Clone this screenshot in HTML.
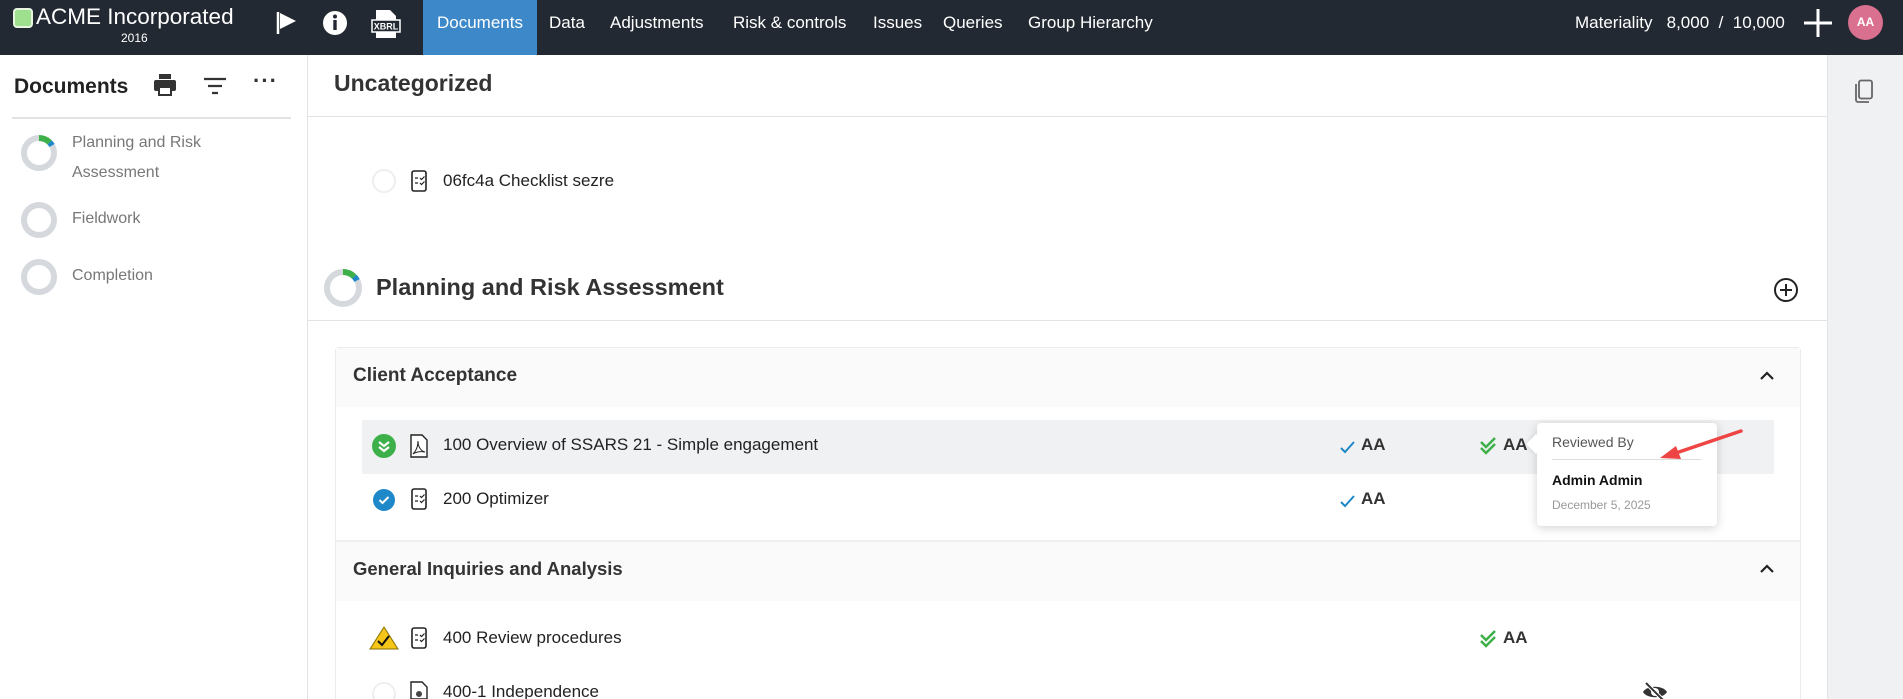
<!DOCTYPE html>
<html style="width:1903px;height:699px;overflow:hidden"><head><meta charset="utf-8"><style>
*{box-sizing:border-box;margin:0;padding:0}
body{width:1903px;height:699px;overflow:hidden;background:#fff;font-family:"Liberation Sans",sans-serif;color:#222;position:relative}
.a{position:absolute;white-space:nowrap}
.nav{position:absolute;left:0;top:0;width:1903px;height:55px;background:#232932}
.ni{position:absolute;top:0;height:55px;line-height:46px;color:#fff;font-size:17px}
</style></head><body>
<div class="nav"></div>
<div class="a" style="left:13px;top:8px;width:20px;height:20px;background:#9fe08e;border:2px solid #e8f5e0;border-radius:4px"></div>
<div class="a" style="left:36px;top:4px;color:#fff;font-size:22.5px">ACME Incorporated</div>
<div class="a" style="left:121px;top:31px;color:#fff;font-size:12px">2016</div>
<svg class="a" style="left:276px;top:10px" width="22" height="26" viewBox="0 0 22 26"><path d="M2 2v22" stroke="#fff" stroke-width="2.5"/><path d="M4 3l16 8-16 8z" fill="#fff"/></svg>
<svg class="a" style="left:322px;top:10px" width="26" height="26"><circle cx="13" cy="13" r="12" fill="#fff"/><rect x="11.3" y="10" width="3.4" height="10" fill="#232932"/><circle cx="13" cy="6.5" r="2" fill="#232932"/></svg>
<svg class="a" style="left:370px;top:8px" width="32" height="32" viewBox="0 0 32 32"><path d="M6 2h14l6 6v22H6z" fill="#fff"/><rect x="2" y="12" width="28" height="12" fill="#232932" stroke="#fff" stroke-width="1.5"/><text x="16" y="21.5" font-size="9" font-weight="bold" fill="#fff" text-anchor="middle" font-family="Liberation Sans">XBRL</text></svg>
<div class="ni" style="left:423px;width:114px;background:#3d88c9;text-align:center">Documents</div>
<div class="ni" style="left:549px">Data</div>
<div class="ni" style="left:610px">Adjustments</div>
<div class="ni" style="left:733px">Risk &amp; controls</div>
<div class="ni" style="left:873px">Issues</div>
<div class="ni" style="left:943px">Queries</div>
<div class="ni" style="left:1028px">Group Hierarchy</div>
<div class="ni" style="left:1575px">Materiality&nbsp;&nbsp; 8,000 &nbsp;/&nbsp; 10,000</div>
<svg class="a" style="left:1803px;top:8px" width="30" height="30"><path d="M15 1v28M1 15h28" stroke="#fff" stroke-width="3"/></svg>
<div class="a" style="left:1848px;top:5px;width:35px;height:35px;border-radius:50%;background:#d9708f;color:#fff;font-size:12px;font-weight:bold;text-align:center;line-height:35px">AA</div>

<div class="a" style="left:307px;top:55px;width:1px;height:644px;background:#e3e3e3"></div>
<div class="a" style="left:14px;top:75px;font-size:21px;font-weight:bold">Documents</div>
<svg class="a" style="left:153px;top:74px" width="24" height="22" viewBox="0 0 24 22"><rect x="6" y="0" width="12" height="5" fill="#333"/><rect x="1" y="6" width="22" height="11" rx="2" fill="#333"/><rect x="6" y="13" width="12" height="8" fill="#fff" stroke="#333" stroke-width="2"/></svg>
<svg class="a" style="left:203px;top:77px" width="24" height="18"><path d="M1 2h22M5 9h14M9 16h6" stroke="#333" stroke-width="2.2"/></svg>
<div class="a" style="left:253px;top:68px;font-size:22px;font-weight:bold;color:#333;letter-spacing:1px">···</div>
<div class="a" style="left:12px;top:117px;width:279px;height:2px;background:#e3e3e3"></div>
<svg class="a" style="left:20px;top:134px" width="38" height="38"><circle cx="19" cy="19" r="15" fill="none" stroke="#d5d8dd" stroke-width="6"/><path d="M19 4A15 15 0 0 1 29.6 8.4" fill="none" stroke="#3eb049" stroke-width="6"/><path d="M29.6 8.4A15 15 0 0 1 32 11.5" fill="none" stroke="#1e88c8" stroke-width="6"/></svg>
<div class="a" style="left:72px;top:128px;font-size:16px;color:#777;line-height:30px">Planning and Risk<br>Assessment</div>
<svg class="a" style="left:20px;top:201px" width="38" height="38"><circle cx="19" cy="19" r="15" fill="none" stroke="#d5d8dd" stroke-width="6"/></svg>
<div class="a" style="left:72px;top:210px;font-size:16px;color:#777">Fieldwork</div>
<svg class="a" style="left:20px;top:258px" width="38" height="38"><circle cx="19" cy="19" r="15" fill="none" stroke="#d5d8dd" stroke-width="6"/></svg>
<div class="a" style="left:72px;top:267px;font-size:16px;color:#777">Completion</div>

<div class="a" style="left:1827px;top:55px;width:76px;height:644px;background:#f0f1f3;border-left:1px solid #e3e3e3"></div>
<svg class="a" style="left:1853px;top:79px" width="22" height="26" viewBox="0 0 22 26"><rect x="6" y="1.5" width="13" height="18" rx="2" fill="none" stroke="#666" stroke-width="1.8"/><path d="M3 5v16a2 2 0 0 0 2 2h11" fill="none" stroke="#666" stroke-width="1.8"/></svg>

<div class="a" style="left:334px;top:70px;font-size:23px;font-weight:bold;color:#333">Uncategorized</div>
<div class="a" style="left:308px;top:116px;width:1519px;height:1px;background:#e3e3e3"></div>
<div class="a" style="left:372px;top:169px;width:24px;height:24px;border-radius:50%;border:2px solid #eee"></div>
<svg class="a" style="left:411px;top:170px" width="16" height="22" viewBox="0 0 16 22"><rect x="1" y="1" width="14" height="20" rx="2" fill="none" stroke="#222" stroke-width="1.6"/><path d="M4 8h3M4 13h3M9 8l1.5 1.5 3-3M9 13l1.5 1.5 3-3" stroke="#222" stroke-width="1.2" fill="none"/></svg>
<div class="a" style="left:443px;top:171px;font-size:17px">06fc4a Checklist sezre</div>

<svg class="a" style="left:323px;top:268px" width="40" height="40"><circle cx="20" cy="20" r="16" fill="none" stroke="#d5d8dd" stroke-width="6"/><path d="M20 4A16 16 0 0 1 31.3 8.7" fill="none" stroke="#3eb049" stroke-width="6"/><path d="M31.3 8.7A16 16 0 0 1 34 12.5" fill="none" stroke="#1e88c8" stroke-width="6"/></svg>
<div class="a" style="left:376px;top:274px;font-size:23.5px;font-weight:bold;color:#333">Planning and Risk Assessment</div>
<svg class="a" style="left:1773px;top:277px" width="26" height="26"><circle cx="13" cy="13" r="11" fill="none" stroke="#222" stroke-width="2"/><path d="M13 7v12M7 13h12" stroke="#222" stroke-width="2"/></svg>
<div class="a" style="left:308px;top:320px;width:1519px;height:1px;background:#e3e3e3"></div>

<div class="a" style="left:335px;top:347px;width:1466px;height:352px;border:1px solid #ececec;border-bottom:none;border-radius:4px 4px 0 0;background:#fff"></div>
<div class="a" style="left:336px;top:348px;width:1464px;height:59px;background:#fafafa"></div>
<div class="a" style="left:353px;top:365px;font-size:19px;font-weight:bold;color:#333">Client Acceptance</div>
<svg class="a" style="left:1759px;top:370px" width="16" height="12"><path d="M2 9l6-6 6 6" fill="none" stroke="#222" stroke-width="2.2"/></svg>

<div class="a" style="left:362px;top:420px;width:1412px;height:54px;background:#f0f1f3"></div>
<svg class="a" style="left:372px;top:434px" width="24" height="24"><circle cx="12" cy="12" r="12" fill="#3eb049"/><path d="M7 8l5 4 5-4M7 13l5 4 5-4" fill="none" stroke="#fff" stroke-width="2.2"/></svg>
<svg class="a" style="left:410px;top:434px" width="18" height="24" viewBox="0 0 18 24"><path d="M1 1h11l5 5v17H1z" fill="#fff" stroke="#222" stroke-width="1.4"/><path d="M3 20c3-3 5-8 5-13 0 6 3 10 7 11-5-1-9 0-12 2" fill="none" stroke="#222" stroke-width="1"/></svg>
<div class="a" style="left:443px;top:435px;font-size:17px">100 Overview of SSARS 21 - Simple engagement</div>
<svg class="a" style="left:1340px;top:440px" width="16" height="14"><path d="M1 8l4 4 9-10" fill="none" stroke="#1e88c8" stroke-width="2"/></svg>
<div class="a" style="left:1361px;top:435px;font-size:17px;font-weight:bold;color:#333">AA</div>
<svg class="a" style="left:1480px;top:437px" width="16" height="18"><path d="M1 5l5 5 9-9M1 11l5 5 9-9" fill="none" stroke="#3eb049" stroke-width="2.5"/></svg>
<div class="a" style="left:1503px;top:435px;font-size:17px;font-weight:bold;color:#333">AA</div>

<svg class="a" style="left:373px;top:489px" width="22" height="22"><circle cx="11" cy="11" r="11" fill="#1e88c8"/><path d="M6.5 11l3 3 6-6" fill="none" stroke="#fff" stroke-width="2"/></svg>
<svg class="a" style="left:411px;top:488px" width="16" height="22" viewBox="0 0 16 22"><rect x="1" y="1" width="14" height="20" rx="2" fill="none" stroke="#222" stroke-width="1.6"/><path d="M4 8h3M4 13h3M9 8l1.5 1.5 3-3M9 13l1.5 1.5 3-3" stroke="#222" stroke-width="1.2" fill="none"/></svg>
<div class="a" style="left:443px;top:489px;font-size:17px">200 Optimizer</div>
<svg class="a" style="left:1340px;top:494px" width="16" height="14"><path d="M1 8l4 4 9-10" fill="none" stroke="#1e88c8" stroke-width="2"/></svg>
<div class="a" style="left:1361px;top:489px;font-size:17px;font-weight:bold;color:#333">AA</div>

<div class="a" style="left:336px;top:540px;width:1464px;height:2px;background:#f0f0f0"></div>
<div class="a" style="left:336px;top:542px;width:1464px;height:59px;background:#fafafa"></div>
<div class="a" style="left:353px;top:558px;font-size:18.5px;font-weight:bold;color:#333">General Inquiries and Analysis</div>
<svg class="a" style="left:1759px;top:563px" width="16" height="12"><path d="M2 9l6-6 6 6" fill="none" stroke="#222" stroke-width="2.2"/></svg>

<svg class="a" style="left:369px;top:626px" width="30" height="24"><path d="M15 1L29 23H1z" fill="#f5c518" stroke="#8a7000" stroke-width="1"/><path d="M9 15l4 4 7-9" fill="none" stroke="#111" stroke-width="2"/></svg>
<svg class="a" style="left:411px;top:627px" width="16" height="22" viewBox="0 0 16 22"><rect x="1" y="1" width="14" height="20" rx="2" fill="none" stroke="#222" stroke-width="1.6"/><path d="M4 8h3M4 13h3M9 8l1.5 1.5 3-3M9 13l1.5 1.5 3-3" stroke="#222" stroke-width="1.2" fill="none"/></svg>
<div class="a" style="left:443px;top:628px;font-size:17px">400 Review procedures</div>
<svg class="a" style="left:1480px;top:630px" width="16" height="18"><path d="M1 5l5 5 9-9M1 11l5 5 9-9" fill="none" stroke="#3eb049" stroke-width="2.5"/></svg>
<div class="a" style="left:1503px;top:628px;font-size:17px;font-weight:bold;color:#333">AA</div>

<div class="a" style="left:372px;top:682px;width:24px;height:24px;border-radius:50%;border:2px solid #eee"></div>
<svg class="a" style="left:410px;top:681px" width="18" height="18" viewBox="0 0 18 18"><path d="M1 1h11l5 5v12H1z" fill="#fff" stroke="#222" stroke-width="1.4"/><circle cx="9" cy="13" r="3" fill="#444"/></svg>
<div class="a" style="left:443px;top:682px;font-size:17px">400-1 Independence</div>
<svg class="a" style="left:1641px;top:681px" width="28" height="18"><path d="M2 11C6 4 22 4 26 11 22 18 6 18 2 11z" fill="#333"/><circle cx="14" cy="11" r="4" fill="#fff"/><path d="M5 2l18 18" stroke="#fff" stroke-width="4"/><path d="M5 2l18 18" stroke="#333" stroke-width="2"/></svg>

<div class="a" style="left:1537px;top:423px;width:180px;height:103px;background:#fff;border-radius:4px;box-shadow:0 2px 10px rgba(0,0,0,.18)"></div>
<div class="a" style="left:1529px;top:437px;width:14px;height:14px;background:#fff;transform:rotate(45deg);box-shadow:-2px 2px 3px rgba(0,0,0,.06)"></div>
<div class="a" style="left:1552px;top:434px;font-size:14px;color:#555">Reviewed By</div>
<div class="a" style="left:1552px;top:459px;width:149px;height:1px;background:#ddd"></div>
<div class="a" style="left:1552px;top:472px;font-size:14px;font-weight:bold;color:#111">Admin Admin</div>
<div class="a" style="left:1552px;top:498px;font-size:12px;color:#999">December 5, 2025</div>
<svg class="a" style="left:1650px;top:425px" width="100" height="40"><path d="M91 6L20 30" stroke="#ee4444" stroke-width="3.5" stroke-linecap="round"/><path d="M10 33l16-12 5 13z" fill="#ee4444"/></svg>
</body></html>
